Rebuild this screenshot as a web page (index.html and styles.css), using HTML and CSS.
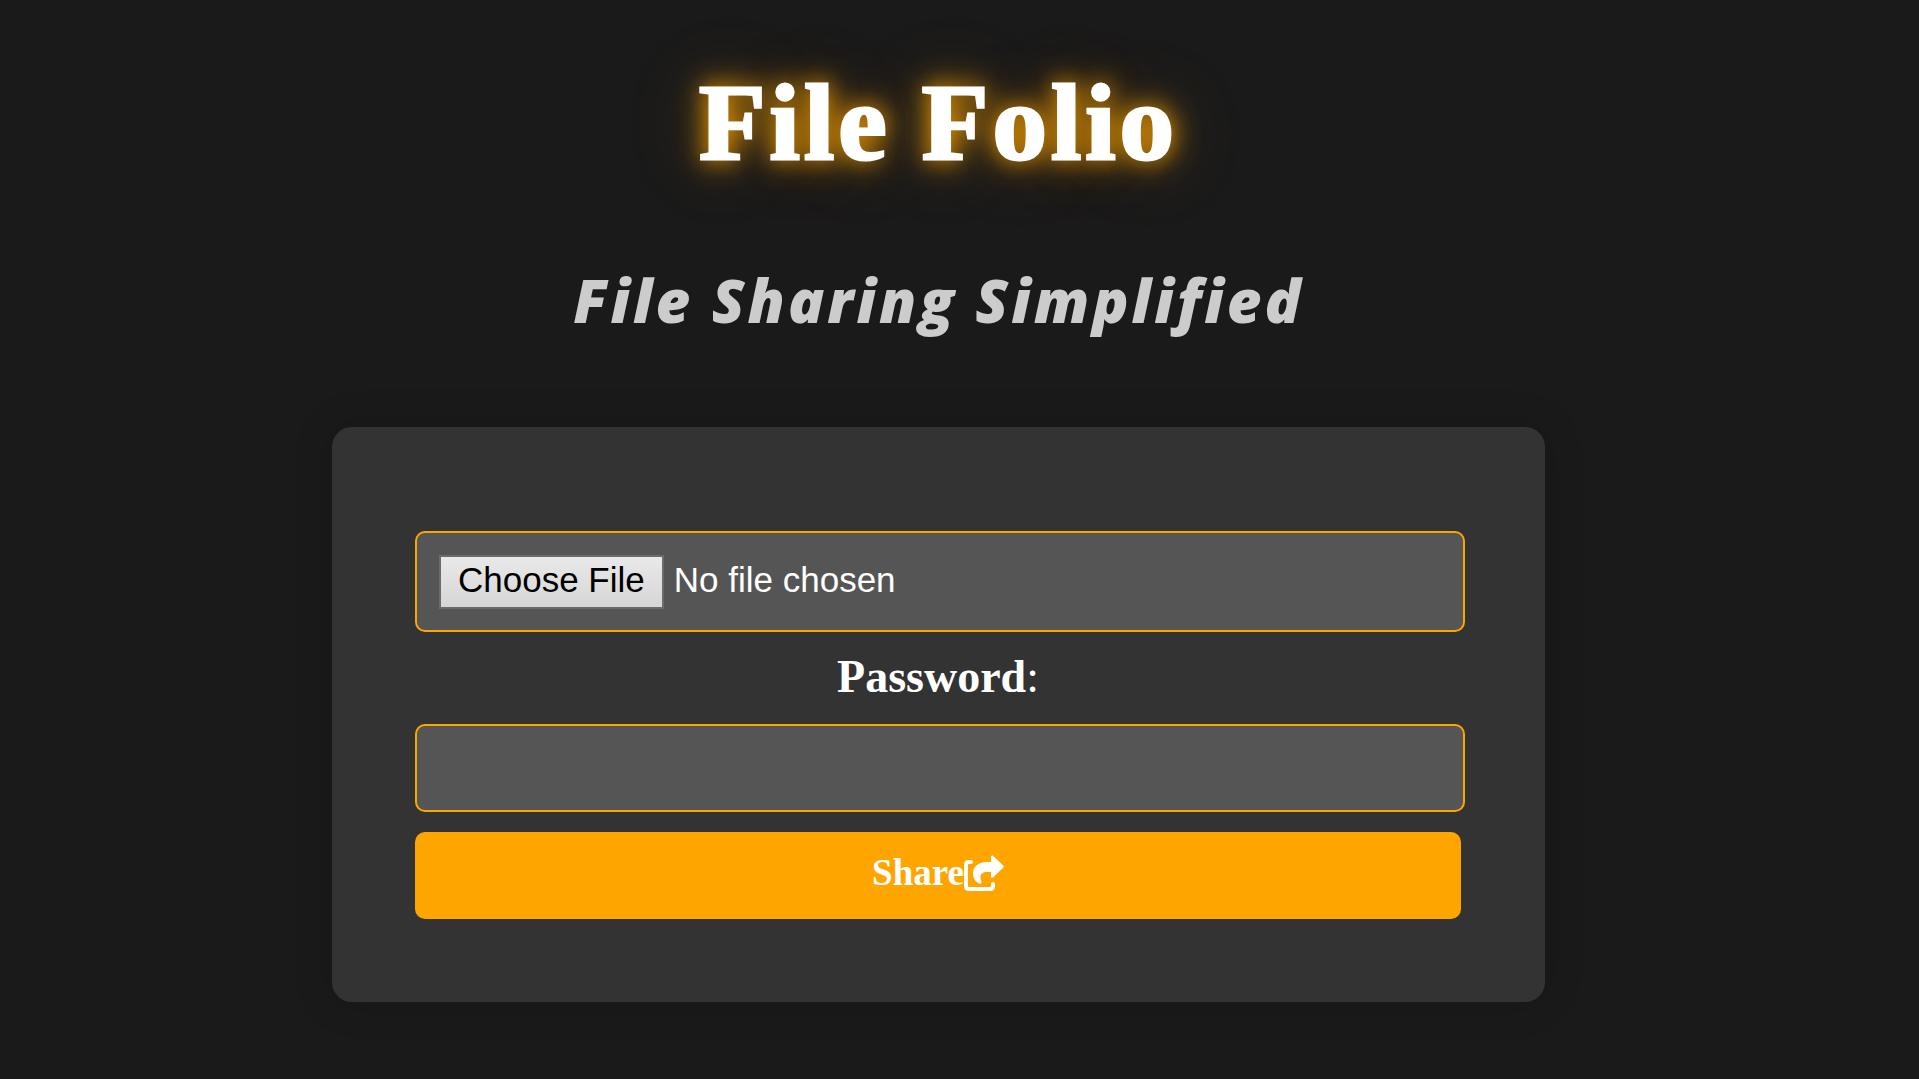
FILE: index.html
```html
<!DOCTYPE html>
<html lang="en">
<head>
<meta charset="utf-8">
<title>File Folio</title>
<link rel="stylesheet" href="styles.css">
</head>
<body>
<main class="page">
  <h1 class="title">File Folio</h1>
  <h2 class="tagline">File Sharing Simplified</h2>
  <form class="card">
    <input class="field file" type="file" aria-label="File to share">
    <label class="label" for="password">Password<span class="colon">:</span></label>
    <input class="field password" type="password" id="password">
    <button class="share" type="button">Share<svg class="icon" viewBox="0 0 40 36" aria-hidden="true">
      <path d="M7 7H5Q2 7 2 10V31Q2 34 5 34H26Q29 34 29 31V29" fill="none" stroke="currentColor" stroke-width="4" stroke-linecap="round" stroke-linejoin="round"/>
      <path d="M27 1.500V7H23C14 7 9 12 9 18C9 24 12 27 15 28.500C16.500 29 18 28.500 17.500 27C15 21 17 17 23 17H27V22Q27.500 23.500 29 22.500L39.300 12.500Q40.300 11.500 39.300 10.500L29 .700Q27.500 0 27 1.500Z" fill="currentColor"/>
    </svg></button>
  </form>
</main>
</body>
</html>
```
FILE: styles.css
```css
* {
  box-sizing: border-box;
}

body {
  margin: 0;
  background: #1a1a1a;
  color: #fff;
  font-family: "Liberation Serif", serif;
}

.page {
  display: flex;
  flex-direction: column;
  align-items: center;
  padding: 61px 42px 76px 0;
}

.title {
  margin: 0;
  font-size: 109px;
  line-height: 124px;
  letter-spacing: 4px;
  -webkit-text-stroke: 3px #fff;
  text-shadow: 0 0 20px rgba(255, 165, 0, 0.6), 0 0 32px orange, 0 0 80px rgba(255, 165, 0, 0.3);
}

.tagline {
  margin: 73px 0 0;
  color: #ccc;
  font-family: "Open Sans", sans-serif;
  font-size: 60px;
  font-style: italic;
  font-weight: 800;
  line-height: 84px;
  letter-spacing: 3px;
}

.card {
  display: flex;
  flex-direction: column;
  width: 90%;
  max-width: 1213px;
  margin-top: 85px;
  padding: 104px 80px 83px 83px;
  border-radius: 20px;
  background: #333;
  box-shadow: 0 0 40px rgba(0, 0, 0, 0.15);
}

.field {
  width: 100%;
  margin: 0;
  border: 2px solid orange;
  border-radius: 10px;
  background: #555;
  color: #fff;
  font-family: "Liberation Sans", sans-serif;
  font-size: 35px;
}

.file {
  height: 101px;
  padding: 22px;
}

.file::file-selector-button {
  height: 54px;
  margin: 0 10px 0 0;
  padding: 0 17px 4px;
  border: 2px solid #6b6b6b;
  border-radius: 0;
  background: linear-gradient(#e9e9e9, #d6d6d6);
  color: #000;
  font: inherit;
}

.label {
  padding: 18px 4px 20px 0;
  font-size: 46px;
  font-weight: bold;
  line-height: 54px;
  text-align: center;
}

.colon {
  font-weight: normal;
}

.password {
  height: 88px;
  padding: 0 22px;
}

.share {
  display: flex;
  align-items: center;
  justify-content: center;
  height: 87px;
  margin: 20px 4px 0 0;
  padding: 0 0 6px;
  border: 0;
  border-radius: 10px;
  background: orange;
  color: #fff;
  font-family: "Liberation Serif", serif;
  font-size: 37px;
  font-weight: bold;
}

.icon {
  width: 40px;
  height: 36px;
}
```
